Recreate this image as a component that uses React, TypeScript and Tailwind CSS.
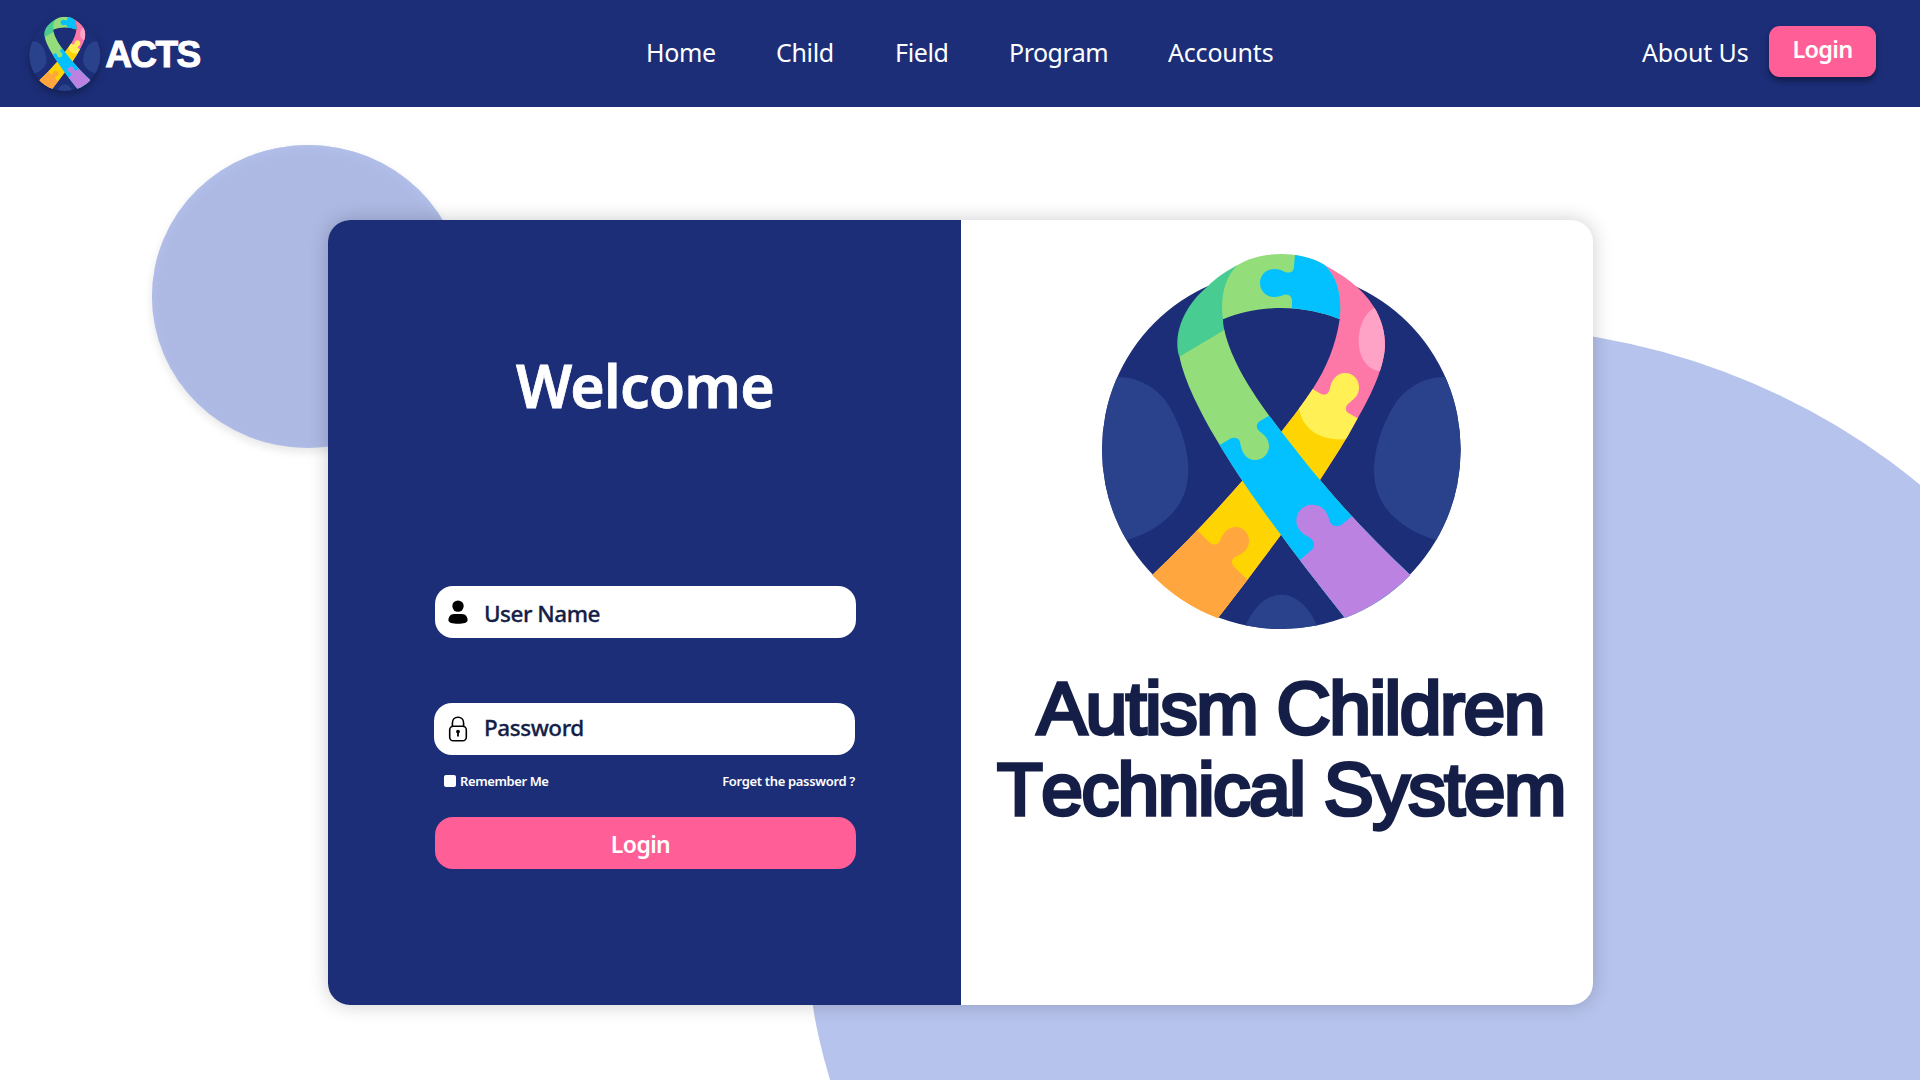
import React, { useId } from "react";

function RibbonLogo({ className }: { className?: string }) {
  const id = useId().replace(/[^a-zA-Z0-9]/g, "");
  const back =
    "M704 75C745 98 780 122 790 132C850 180 885 245 885 312C885 375 848 458 803 535C770 598 730 658 690 720C620 822 530 945 384 1134A540 540 0 0 1 187 1005C285 912 370 822 457 722C500 672 535 622 574 575C608 532 642 487 668 447C709 385 738 315 749 238C755 180 740 110 704 75Z";
  const front =
    "M268 350C284 425 330 515 380 600C430 685 500 788 574 886C640 976 705 1058 765 1134A540 540 0 0 0 961 1005C870 920 778 825 690 720C650 673 612 623 574 575C500 480 425 370 403 270Z";
  const arch =
    "M443 75C480 52 525 42 574 42C625 42 670 54 704 75C742 112 757 170 749 238C700 217 635 204 574 204C515 204 452 216 399 238C390 180 402 112 443 75Z";
  return (
    <svg viewBox="0 0 1140 1200" className={className} aria-hidden="true">
      <defs>
        <clipPath id={`${id}c`}>
          <circle cx="574" cy="629" r="538" />
        </clipPath>
        <clipPath id={`${id}b`}>
          <path d={back} />
        </clipPath>
        <clipPath id={`${id}f`}>
          <path d={front} />
        </clipPath>
        <clipPath id={`${id}a`}>
          <path d={arch} />
        </clipPath>
      </defs>
      <circle cx="574" cy="629" r="538" fill="#1c2e78" />
      <g clipPath={`url(#${id}c)`} fill="#2a428c">
        <path d="M82 411C135 411 186 432 225 480C258 525 295 612 295 690C295 810 205 870 112 900H0V411Z" />
        <path d="M1066 411C1013 411 962 432 923 480C890 525 852 612 852 690C852 810 943 870 1036 900H1148V411Z" />
        <path d="M466 1158C494 1096 532 1064 574 1064C616 1064 654 1096 682 1158V1200H466Z" />
      </g>
      <g clipPath={`url(#${id}b)`}>
        <rect width="1140" height="1200" fill="#fd78a7" />
        <path d="M852 204C822 222 806 262 806 302C806 350 830 390 872 394H900V204Z" fill="#fea2c6" />
        <path d="M560 500H640L780 580H850V900L400 1200L100 1100Z" fill="#ffd403" />
        <path
          d="M620 447H668L688 459C702 468 716 465 719 448C724 420 740 399 765 399C790 399 807 418 807 442C807 465 795 475 780 487C764 498 765 513 775 519L803 535L820 545L767 598C690 602 640 570 627 507Z"
          fill="#fff155"
        />
        <path
          d="M310 860L355 904C367 917 382 917 390 902C400 878 415 861 437 861C460 861 477 880 477 903C477 925 462 940 440 948C424 956 422 968 432 980L480 1027L385 1150L170 1010Z"
          fill="#ffa63f"
        />
      </g>
      <path
        d="M443 75C405 96 378 114 355 137C300 182 262 245 262 312C262 326 264 340 268 350L275 352L403 276V270C400 258 399 248 399 238L405 234L446 75Z"
        fill="#49cc91"
      />
      <g clipPath={`url(#${id}f)`}>
        <rect width="1140" height="1200" fill="#94dd7b" />
        <path
          d="M550 520L510 543C496 552 498 566 510 575C526 586 537 600 537 618C537 642 518 660 495 660C470 660 455 640 450 606C446 593 431 590 418 598L388 616H370L500 900L800 1200L1000 1000L700 600Z"
          fill="#03c1fe"
        />
        <path
          d="M797 820L757 853C744 862 726 860 720 846C712 812 695 794 665 794C640 794 619 815 619 842C619 865 635 880 657 892C673 902 676 915 667 928L620 969L764 1150L980 1010Z"
          fill="#bb82e2"
        />
      </g>
      <g clipPath={`url(#${id}a)`}>
        <rect width="1140" height="300" fill="#94dd7b" />
        <path
          d="M616 30L612 80C611 95 600 101 585 96C575 91 565 87 552 87C528 87 510 105 510 129C510 152 528 171 552 171C565 171 575 167 583 164C598 162 606 172 606 182L604 260H800V30Z"
          fill="#03c1fe"
        />
      </g>
    </svg>
  );
}

function UserIcon() {
  return (
    <svg viewBox="0 0 20 24" className="h-6 w-5 shrink-0" fill="#000">
      <circle cx="10" cy="6.1" r="5.7" />
      <path d="M6 14H14C17.6 14 19.6 17 19.6 20.2C19.6 22.6 15.5 23.7 10 23.7S.4 22.6 .4 20.2C.4 17 2.4 14 6 14Z" />
    </svg>
  );
}

function LockIcon() {
  return (
    <svg viewBox="0 0 20 26" className="h-[26px] w-5 shrink-0" fill="none" stroke="#000" strokeWidth="1.6">
      <rect x="1.7" y="10.2" width="16.6" height="14.6" rx="3.6" />
      <path d="M4.4 10V6.9C4.4 3.6 6.6 1.2 10 1.2S15.6 3.6 15.6 6.9V10" />
      <circle cx="10" cy="15.6" r="1.9" fill="#000" stroke="none" />
      <path d="M10 16V20.6" strokeWidth="1.8" />
    </svg>
  );
}

export default function App() {
  return (
    <div className="relative isolate flex h-[1080px] w-[1920px] flex-col overflow-hidden bg-white font-['Noto_Sans',sans-serif]">
      <div className="absolute left-[152px] top-[145px] -z-10 h-[303px] w-[312px] rounded-[50%] bg-[#adb9e3] shadow-[0_4px_10px_rgba(0,0,0,0.1),inset_0_3px_12px_#b3c1ec]" />
      <div className="absolute left-[806px] top-[326px] -z-10 h-[1190px] w-[1326px] rounded-[50%] bg-[#b6c3ed]" />

      <header className="flex h-[107px] shrink-0 items-start bg-[#1c2e78] text-white">
        <div className="flex w-[646px] items-start pl-[27px] pt-[14px]">
          <RibbonLogo className="h-[79.2px] w-[75.2px] drop-shadow-[0_4px_4px_rgba(0,0,0,0.3)]" />
          <span className="ml-[3px] mt-[13px] font-['Liberation_Sans',sans-serif] text-[37px] font-bold leading-[56px] tracking-[-1.6px] [-webkit-text-stroke:1px_white] [font-kerning:none]">
            ACTS
          </span>
        </div>
        <nav className="flex w-[996px] pt-[34px] text-[25px] leading-[36px] tracking-[-0.35px]">
          <a className="w-[130px]">Home</a>
          <a className="w-[119px]">Child</a>
          <a className="w-[114px]">Field</a>
          <a className="w-[159px] tracking-[-0.5px]">Program</a>
          <a className="tracking-[-0.2px]">Accounts</a>
        </nav>
        <a className="w-[127px] whitespace-nowrap pt-[34px] text-[25px] leading-[36px] tracking-[-0.15px]">About Us</a>
        <button className="mt-[26px] h-[51px] w-[107px] rounded-[11px] bg-[#ff5f96] pb-[3px] text-[23.5px] font-semibold tracking-[-0.7px] shadow-[0_4px_6px_rgba(0,0,0,0.4)]">
          Login
        </button>
      </header>

      <main className="ml-[328px] mt-[113px] flex h-[785px] w-[1265px] overflow-hidden rounded-[22px] bg-white shadow-[0_0_20px_rgba(0,0,0,0.2)]">
        <section className="flex w-[633px] flex-col bg-[#1c2e78] pl-[107px] text-white">
          <h1 className="mt-[125px] w-[420px] text-center text-[59px] font-semibold leading-[80px] tracking-[-0.8px] [-webkit-text-stroke:0.8px_white]">
            Welcome
          </h1>
          <div className="mt-[161px] flex h-[52px] w-[421px] items-center rounded-[18px] bg-white pl-[13px] text-[#141e46]">
            <UserIcon />
            <span className="ml-[16px] mt-[3px] text-[22.5px] font-medium tracking-[-0.5px] [-webkit-text-stroke:0.3px_#141e46]">
              User Name
            </span>
          </div>
          <div className="-ml-px mt-[65px] flex h-[52px] w-[421px] items-center rounded-[18px] bg-white pl-[14px] text-[#141e46]">
            <LockIcon />
            <span className="-mt-[3px] ml-[16px] text-[22.5px] font-medium tracking-[-0.45px] [-webkit-text-stroke:0.3px_#141e46]">
              Password
            </span>
          </div>
          <div className="mt-[16px] flex h-[20px] w-[420px] items-center text-[13px] font-semibold">
            <span className="ml-[9px] size-[12px] rounded-[2px] bg-white" />
            <span className="ml-[4px] mt-[2px] tracking-[-0.4px]">Remember Me</span>
            <span className="ml-auto mt-[2px] tracking-[-0.33px]">Forget the password ?</span>
          </div>
          <button className="mt-[26px] h-[52px] w-[421px] rounded-[18px] bg-[#ff5f96] pr-[10px] pt-[2px] text-[23px] font-semibold tracking-[-0.6px]">
            Login
          </button>
        </section>
        <section className="flex w-[632px] flex-col pl-[129px] pt-[20px]">
          <RibbonLogo className="h-[400px] w-[380px]" />
          <h2 className="-ml-[93px] mt-[28px] w-[580px] whitespace-nowrap font-['Liberation_Sans',sans-serif] text-[75px] leading-[81px] tracking-[-1.5px] text-[#141e46] [-webkit-text-stroke:3.6px_#141e46] [font-kerning:none]">
            <span className="block pl-[40px]">Autism Children</span>
            <span className="block">Technical System</span>
          </h2>
        </section>
      </main>
    </div>
  );
}
